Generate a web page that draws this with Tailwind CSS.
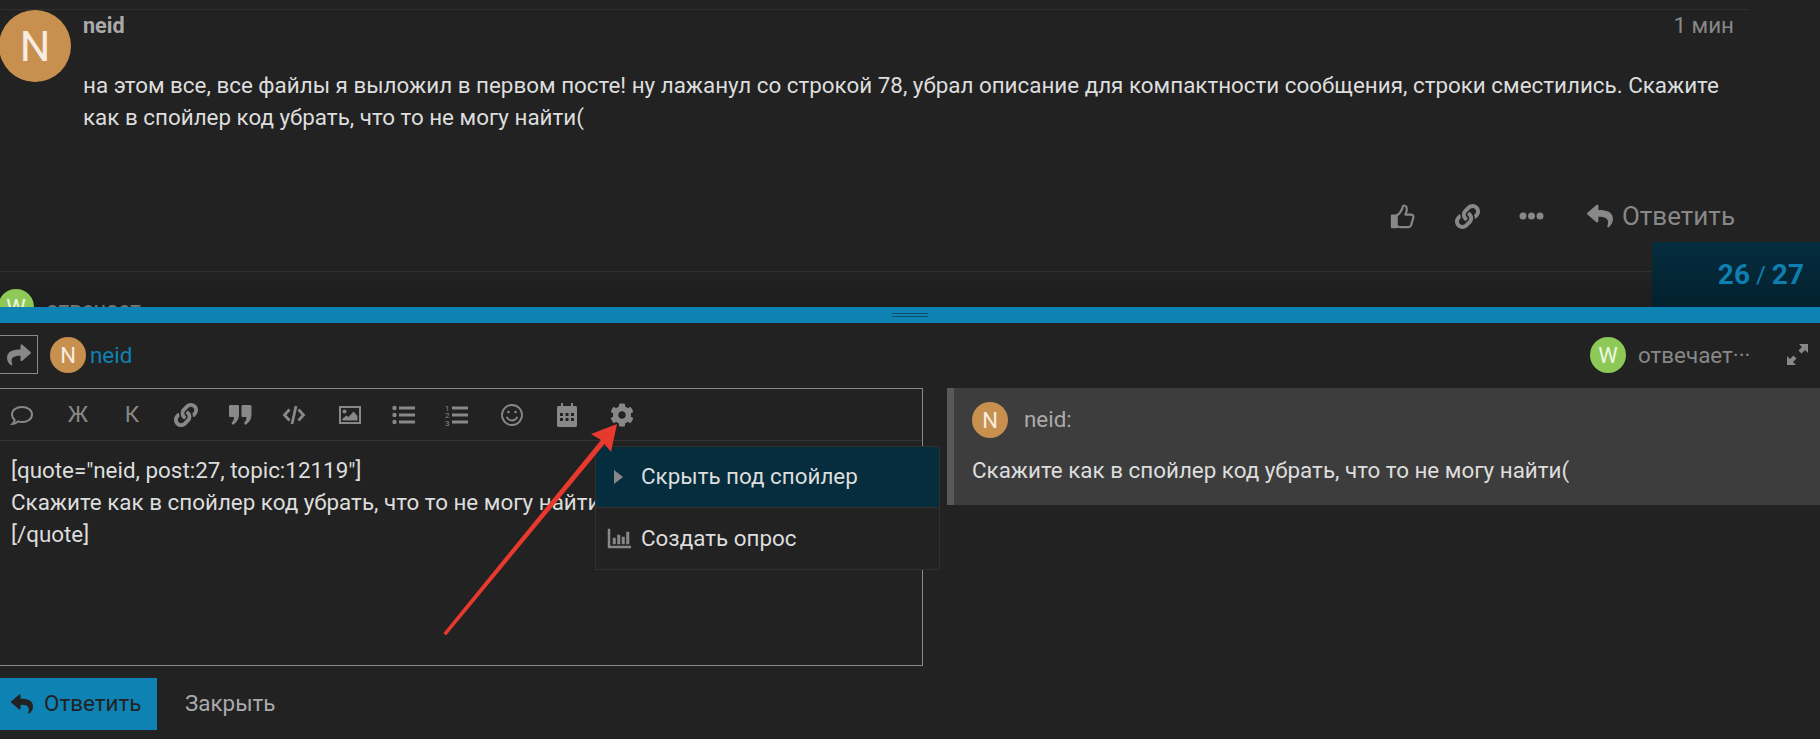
<!DOCTYPE html>
<html lang="ru">
<head>
<meta charset="utf-8">
<script src="https://cdn.jsdelivr.net/npm/@tailwindcss/browser@4"></script>
</head>
<body class="m-0 bg-[#222222]">
<div class="relative flex h-[739px] w-[1820px] flex-col overflow-hidden bg-[#222222] font-[Roboto,sans-serif] text-[#dddddd]">

  <!-- post -->
  <section class="relative flex h-[307px] shrink-0 flex-col overflow-hidden pt-[9px]">
    <div class="mr-[70px] flex h-[262px] shrink-0 border-t border-[#2f2f2f]">
      <div class="-ml-px flex size-[72px] shrink-0 items-center justify-center rounded-full bg-[#c8904f] text-[43px] text-[#f7ece0]">N</div>
      <div class="ml-[12px] flex min-w-0 flex-1 flex-col">
        <div class="mt-[4px] flex h-[24px] items-center justify-between">
          <span class="text-[21.6px] font-bold text-[#aaaaaa]">neid</span>
          <span class="mr-[16px] text-[22.4px] text-[#888888]">1 мин</span>
        </div>
        <p class="mt-[31px] w-[1650px] text-[22.4px] leading-[32px] text-[#dddddd]">на этом все, все файлы я выложил в первом посте! ну лажанул со строкой 78, убрал описание для компактности сообщения, строки сместились. Скажите как в спойлер код убрать, что то не могу найти(</p>
        <div class="mr-[15px] mt-[66px] flex h-[34px] items-center justify-end text-[#888888]">
          <svg class="mr-[40px] h-[27px] w-[25px]" viewBox="0 0 26 26" fill="none" stroke="#888888" stroke-width="2.2" stroke-linejoin="round"><path d="M2 12h5v12H2z" fill="#888888"/><path d="M7 12c3-2 5-5 6-8 0-2 1-3 3-2 2 1 2 5 0 9h6c2 0 3 2 2 4l-2 7c-.5 1.500-1.500 2-3 2H11c-2 0-3-1-4-1"/></svg>
          <svg class="mr-[39px] size-[25px]" viewBox="0 0 512 512" fill="#888888"><path d="M326.612 185.391c59.747 59.809 58.927 155.698.36 214.59-.11.12-.24.25-.36.37l-67.2 67.2c-59.27 59.27-155.699 59.262-214.96 0-59.27-59.26-59.27-155.7 0-214.96l37.106-37.106c9.84-9.84 26.786-3.3 27.294 10.606.648 17.722 3.826 35.527 9.69 52.721 1.986 5.822.567 12.262-3.783 16.612l-13.087 13.087c-28.026 28.026-28.905 73.66-1.155 101.96 28.024 28.579 74.086 28.749 102.325.51l67.2-67.19c28.191-28.191 28.073-73.757 0-101.83-3.701-3.694-7.429-6.564-10.341-8.569a16.037 16.037 0 0 1-6.947-12.606c-.396-10.567 3.348-21.456 11.698-29.806l21.054-21.055c5.521-5.521 14.182-6.199 20.584-1.731a152.482 152.482 0 0 1 20.522 17.197zM467.547 44.449c-59.261-59.262-155.69-59.27-214.96 0l-67.2 67.2c-.12.12-.25.25-.36.37-58.566 58.892-59.387 154.781.36 214.59a152.454 152.454 0 0 0 20.521 17.196c6.402 4.468 15.064 3.789 20.584-1.731l21.054-21.055c8.35-8.35 12.094-19.239 11.698-29.806a16.037 16.037 0 0 0-6.947-12.606c-2.912-2.005-6.64-4.875-10.341-8.569-28.073-28.073-28.191-73.639 0-101.83l67.2-67.19c28.239-28.239 74.3-28.069 102.325.51 27.75 28.3 26.872 73.934-1.155 101.96l-13.087 13.087c-4.35 4.35-5.769 10.79-3.783 16.612 5.864 17.194 9.042 34.999 9.69 52.721.509 13.906 17.454 20.446 27.294 10.606l37.106-37.106c59.271-59.259 59.271-155.699.001-214.959z"/></svg>
          <svg class="mr-[43px] h-[10px] w-[25px]" viewBox="0 0 25 10" fill="#888888"><circle cx="4" cy="5" r="3.500"/><circle cx="12.500" cy="5" r="3.500"/><circle cx="21" cy="5" r="3.500"/></svg>
          <svg class="mr-[9px] size-[26px]" viewBox="0 0 512 512" fill="#888888"><path d="M8.309 189.836L184.313 37.851C199.719 24.546 224 35.347 224 56.015v80.053c160.629 1.839 288 34.032 288 186.258 0 61.441-39.581 122.309-83.333 154.132-13.653 9.931-33.111-2.533-28.077-18.631 45.344-145.012-21.507-183.51-176.59-185.742V360c0 20.7-24.3 31.453-39.687 18.164l-176.004-152c-11.071-9.562-11.086-26.753 0-36.328z"/></svg>
          <span class="text-[26px]">Ответить</span>
        </div>
      </div>
    </div>
    <div class="flex flex-1 items-start border-t border-[#2f2f2f] bg-gradient-to-b from-[#222222] to-[#1a1a1a] pt-[17px]">
      <div class="-ml-[2px] flex size-[36px] shrink-0 items-center justify-center rounded-full bg-[#8ec957] text-[22px] text-[#eef7e2]">W</div>
      <span class="ml-[12px] mt-[4px] text-[22.4px] text-[#777777]">отвечает</span>
    </div>
    <div class="absolute right-0 top-[242px] flex h-[65px] w-[168px] items-center justify-end bg-gradient-to-b from-[#052d3e] to-[#03212e] pr-[16px] text-[28px] font-bold text-[#0e7fb0]">26<span class="mx-[6px] text-[24px] font-normal">/</span>27</div>
  </section>

  <!-- resize bar -->
  <div class="flex h-[16px] shrink-0 flex-col items-center justify-center gap-[2px] bg-[#0e82b2]">
    <div class="h-px w-[36px] bg-[#0a4f6e]"></div>
    <div class="h-px w-[36px] bg-[#0a4f6e]"></div>
  </div>

  <!-- composer head -->
  <div class="flex h-[65px] shrink-0 items-start pt-[12px]">
    <div class="-ml-px flex h-[39px] w-[39px] shrink-0 items-center justify-center border border-[#8a8a8a]">
      <svg class="size-[24px]" viewBox="0 0 512 512" fill="#888888"><path transform="translate(512 0) scale(-1 1)" d="M8.309 189.836L184.313 37.851C199.719 24.546 224 35.347 224 56.015v80.053c160.629 1.839 288 34.032 288 186.258 0 61.441-39.581 122.309-83.333 154.132-13.653 9.931-33.111-2.533-28.077-18.631 45.344-145.012-21.507-183.51-176.59-185.742V360c0 20.7-24.3 31.453-39.687 18.164l-176.004-152c-11.071-9.562-11.086-26.753 0-36.328z"/></svg>
    </div>
    <div class="ml-[12px] mt-[2px] flex size-[36px] shrink-0 items-center justify-center rounded-full bg-[#c8904f] text-[22px] text-[#f7ece0]">N</div>
    <span class="ml-[4px] mt-[4px] text-[22.4px] text-[#0e82b2]">neid</span>
    <div class="ml-auto mt-[2px] flex size-[36px] shrink-0 items-center justify-center rounded-full bg-[#8ec957] text-[22px] text-[#eef7e2]">W</div>
    <span class="ml-[12px] mt-[4px] w-[120px] whitespace-nowrap text-[22.4px] text-[#888888]">отвечает···</span>
    <svg class="ml-[29px] mr-[12px] mt-[9px] size-[21px]" viewBox="0 0 21 21" fill="#888888"><path d="M12 0h9v9l-3-3-3.500 3.500-3-3L15 3zM9 21H0v-9l3 3 3.500-3.500 3 3L6 18z"/></svg>
  </div>

  <!-- editor + preview -->
  <div class="flex h-[278px] shrink-0 items-start">
    <div class="relative flex h-full w-[923px] shrink-0 flex-col border-y border-r border-[#8a8a8a]">
      <div class="relative h-[52px] shrink-0 border-b border-[#333333] text-[#888888]">
        <div class="flex h-full items-center pl-[10px] text-[22.4px] leading-none">
          <svg class="size-[24px]" viewBox="0 0 24 24" fill="none" stroke="#888888" stroke-width="2"><path d="M12 4c5.500 0 10 3 10 7.500S17.500 19 12 19c-1.500 0-3-.2-4-.6C6.500 20 4.500 21 2.500 21c1-1 2-2.500 2.200-4C3 15.500 2 13.500 2 11.500 2 7 6.500 4 12 4z"/></svg>
          <span class="ml-[32px] flex w-[24px] justify-center">Ж</span>
          <span class="ml-[30px] flex w-[24px] justify-center">К</span>
          <svg class="ml-[30px] size-[24px]" viewBox="0 0 512 512" fill="#888888"><path d="M326.612 185.391c59.747 59.809 58.927 155.698.36 214.59-.11.12-.24.25-.36.37l-67.2 67.2c-59.27 59.27-155.699 59.262-214.96 0-59.27-59.26-59.27-155.7 0-214.96l37.106-37.106c9.84-9.84 26.786-3.3 27.294 10.606.648 17.722 3.826 35.527 9.69 52.721 1.986 5.822.567 12.262-3.783 16.612l-13.087 13.087c-28.026 28.026-28.905 73.66-1.155 101.96 28.024 28.579 74.086 28.749 102.325.51l67.2-67.19c28.191-28.191 28.073-73.757 0-101.83-3.701-3.694-7.429-6.564-10.341-8.569a16.037 16.037 0 0 1-6.947-12.606c-.396-10.567 3.348-21.456 11.698-29.806l21.054-21.055c5.521-5.521 14.182-6.199 20.584-1.731a152.482 152.482 0 0 1 20.522 17.197zM467.547 44.449c-59.261-59.262-155.69-59.27-214.96 0l-67.2 67.2c-.12.12-.25.25-.36.37-58.566 58.892-59.387 154.781.36 214.59a152.454 152.454 0 0 0 20.521 17.196c6.402 4.468 15.064 3.789 20.584-1.731l21.054-21.055c8.35-8.35 12.094-19.239 11.698-29.806a16.037 16.037 0 0 0-6.947-12.606c-2.912-2.005-6.64-4.875-10.341-8.569-28.073-28.073-28.191-73.639 0-101.83l67.2-67.19c28.239-28.239 74.3-28.069 102.325.51 27.75 28.3 26.872 73.934-1.155 101.96l-13.087 13.087c-4.35 4.35-5.769 10.79-3.783 16.612 5.864 17.194 9.042 34.999 9.69 52.721.509 13.906 17.454 20.446 27.294 10.606l37.106-37.106c59.271-59.259 59.271-155.699.001-214.959z"/></svg>
          <svg class="ml-[30px] size-[24px]" viewBox="0 0 24 24" fill="#888888"><path d="M2.500 2h7c1 0 1.500.5 1.500 1.500V11c0 5-2 8-6 11l-1.500-2c1.500-1.500 2.500-3.500 2.500-6H2.500C1.500 14 1 13.500 1 12.500v-9C1 2.500 1.500 2 2.500 2zM15 2h7c1 0 1.500.5 1.500 1.500V11c0 5-2 8-6 11L16 20c1.500-1.500 2.500-3.500 2.500-6H15c-1 0-1.500-.5-1.500-1.500v-9C13.500 2.500 14 2 15 2z"/></svg>
          <svg class="ml-[30px] size-[24px]" viewBox="0 0 24 24" fill="none" stroke="#888888" stroke-width="2.800"><path d="M7.500 6.500 2.500 12l5 5.500M16.500 6.500l5 5.500-5 5.500M14 3l-4 18"/></svg>
          <svg class="ml-[32px] size-[24px]" viewBox="0 0 24 24"><rect x="2" y="4" width="20" height="16" fill="none" stroke="#888888" stroke-width="2"/><circle cx="6.500" cy="8.500" r="2" fill="#888888"/><path d="M4.500 17.500v-2l4-3 2 1.500 5-5.500 4 4.500v4.500z" fill="#888888"/></svg>
          <svg class="ml-[30px] size-[24px]" viewBox="0 0 24 24" fill="#888888"><circle cx="2.500" cy="5" r="2.200"/><circle cx="2.500" cy="12" r="2.200"/><circle cx="2.500" cy="19" r="2.200"/><rect x="7" y="3.500" width="16" height="3"/><rect x="7" y="10.500" width="16" height="3"/><rect x="7" y="17.500" width="16" height="3"/></svg>
          <svg class="ml-[29px] size-[24px]" viewBox="0 0 24 24" fill="#888888"><text x="0" y="7.500" font-size="8" font-family="Roboto">1</text><text x="0" y="15" font-size="8" font-family="Roboto">2</text><text x="0" y="22.500" font-size="8" font-family="Roboto">3</text><rect x="7" y="3.500" width="16" height="3"/><rect x="7" y="10.500" width="16" height="3"/><rect x="7" y="17.500" width="16" height="3"/></svg>
          <svg class="ml-[31px] size-[24px]" viewBox="0 0 24 24" fill="none" stroke="#888888" stroke-width="1.800"><circle cx="12" cy="12" r="10"/><path d="M7 14.500c1.200 2 3 3 5 3s3.800-1 5-3" stroke-linecap="round"/><circle cx="8.500" cy="9" r="1.300" fill="#888888" stroke="none"/><circle cx="15.500" cy="9" r="1.300" fill="#888888" stroke="none"/></svg>
          <svg class="ml-[31px] size-[24px]" viewBox="0 0 24 24"><path fill="#888888" fill-rule="evenodd" d="M6 0h2v3h8V0h2v3h2.500c.8 0 1.500.7 1.500 1.500v18c0 .8-.7 1.500-1.500 1.500h-17C2.700 24 2 23.300 2 22.500v-18C2 3.700 2.700 3 3.500 3H6zM5 10v3h3v-3zm5.500 0v3h3v-3zm5.500 0v3h3v-3zM5 15v3h3v-3zm5.500 0v3h3v-3zm5.500 0v3h3v-3z"/></svg>
          <svg class="ml-[31px] size-[24px]" viewBox="0 0 512 512" fill="#888888"><path d="M487.4 315.700l-42.600-24.600c4.300-23.200 4.300-47 0-70.200l42.600-24.600c4.900-2.800 7.100-8.600 5.500-14-11.100-35.600-30-67.800-54.700-94.600-3.800-4.100-10-5.100-14.800-2.300L380.800 110c-17.900-15.400-38.500-27.300-60.800-35.100V25.800c0-5.600-3.900-10.500-9.400-11.700-36.700-8.200-74.300-7.800-109.200 0-5.500 1.200-9.400 6.100-9.400 11.700V75c-22.200 7.900-42.800 19.800-60.800 35.100L88.700 85.500c-4.900-2.800-11-1.900-14.800 2.300-24.700 26.700-43.600 58.900-54.700 94.600-1.700 5.400.6 11.200 5.500 14L67.300 221c-4.300 23.200-4.300 47 0 70.200l-42.600 24.600c-4.900 2.800-7.100 8.600-5.500 14 11.100 35.600 30 67.800 54.700 94.600 3.800 4.100 10 5.100 14.800 2.300l42.600-24.600c17.900 15.400 38.500 27.300 60.800 35.100v49.200c0 5.600 3.900 10.500 9.400 11.700 36.700 8.200 74.300 7.800 109.200 0 5.500-1.200 9.400-6.100 9.400-11.700v-49.200c22.200-7.900 42.800-19.800 60.800-35.100l42.600 24.600c4.900 2.800 11 1.900 14.800-2.300 24.700-26.700 43.600-58.900 54.700-94.600 1.500-5.500-.7-11.300-5.600-14.100zM256 336c-44.100 0-80-35.900-80-80s35.900-80 80-80 80 35.900 80 80-35.900 80-80 80z"/></svg>
        </div>
      </div>
      <div class="pl-[11px] pt-[13px] text-[22.4px] leading-[32px] text-[#dddddd]">
        <div>[quote="neid, post:27, topic:12119"]</div>
        <div>Скажите как в спойлер код убрать, что то не могу найти(</div>
        <div>[/quote]</div>
      </div>
    </div>
    <div class="ml-[24px] flex h-[117px] flex-1 flex-col border-l-[7px] border-[#595959] bg-[#3d3d3d] pl-[18px] pt-[14px]">
      <div class="flex items-center">
        <div class="flex size-[36px] items-center justify-center rounded-full bg-[#c8904f] text-[22px] text-[#f7ece0]">N</div>
        <span class="ml-[16px] text-[22.4px] text-[#aaaaaa]">neid:</span>
      </div>
      <p class="mt-[16px] text-[22.4px] leading-[32px] text-[#dddddd]">Скажите как в спойлер код убрать, что то не могу найти(</p>
    </div>
  </div>

  <!-- footer -->
  <div class="mt-[12px] flex h-[52px] shrink-0 items-center">
    <div class="flex h-full w-[157px] items-center bg-[#0e82b2] pl-[11px] text-[22.4px] text-[#222222]">
      <svg class="mr-[11px] size-[22px]" viewBox="0 0 512 512" fill="#222222"><path d="M8.309 189.836L184.313 37.851C199.719 24.546 224 35.347 224 56.015v80.053c160.629 1.839 288 34.032 288 186.258 0 61.441-39.581 122.309-83.333 154.132-13.653 9.931-33.111-2.533-28.077-18.631 45.344-145.012-21.507-183.51-176.59-185.742V360c0 20.7-24.3 31.453-39.687 18.164l-176.004-152c-11.071-9.562-11.086-26.753 0-36.328z"/></svg>
      <span>Ответить</span>
    </div>
    <span class="ml-[28px] text-[22.4px] text-[#aaaaaa]">Закрыть</span>
  </div>

  <!-- popup menu -->
  <div class="absolute left-[595px] top-[446px] w-[345px] border border-[#303030] bg-[#222222] text-[22.4px] text-[#dddddd]">
    <div class="flex h-[61px] items-center border-b border-[#303030] bg-[#052d3e]">
      <svg class="ml-[17px] mr-[17px] h-[14px] w-[11px]" viewBox="0 0 11 14" fill="#888888"><path d="M1 0l9 7-9 7z"/></svg>
      <span>Скрыть под спойлер</span>
    </div>
    <div class="flex h-[61px] items-center">
      <svg class="ml-[11px] mr-[10px] size-[24px]" viewBox="0 0 24 24" fill="#888888" stroke="#888888" stroke-width="0.5"><path d="M1 2h2v17h21v2H1z"/><rect x="6" y="11" width="2.500" height="6"/><rect x="10.500" y="8" width="2.500" height="9"/><rect x="15" y="10" width="2.500" height="7"/><rect x="19.500" y="5" width="2.500" height="12"/></svg>
      <span>Создать опрос</span>
    </div>
  </div>

  <!-- annotation arrow -->
  <svg class="absolute left-0 top-0 h-[739px] w-[1820px]" viewBox="0 0 1820 739" fill="#e8392e"><path d="M443.500 633 446 635.500 604.500 444 611 452 617 424 591 434 601 440z"/></svg>
</div>
</body>
</html>
